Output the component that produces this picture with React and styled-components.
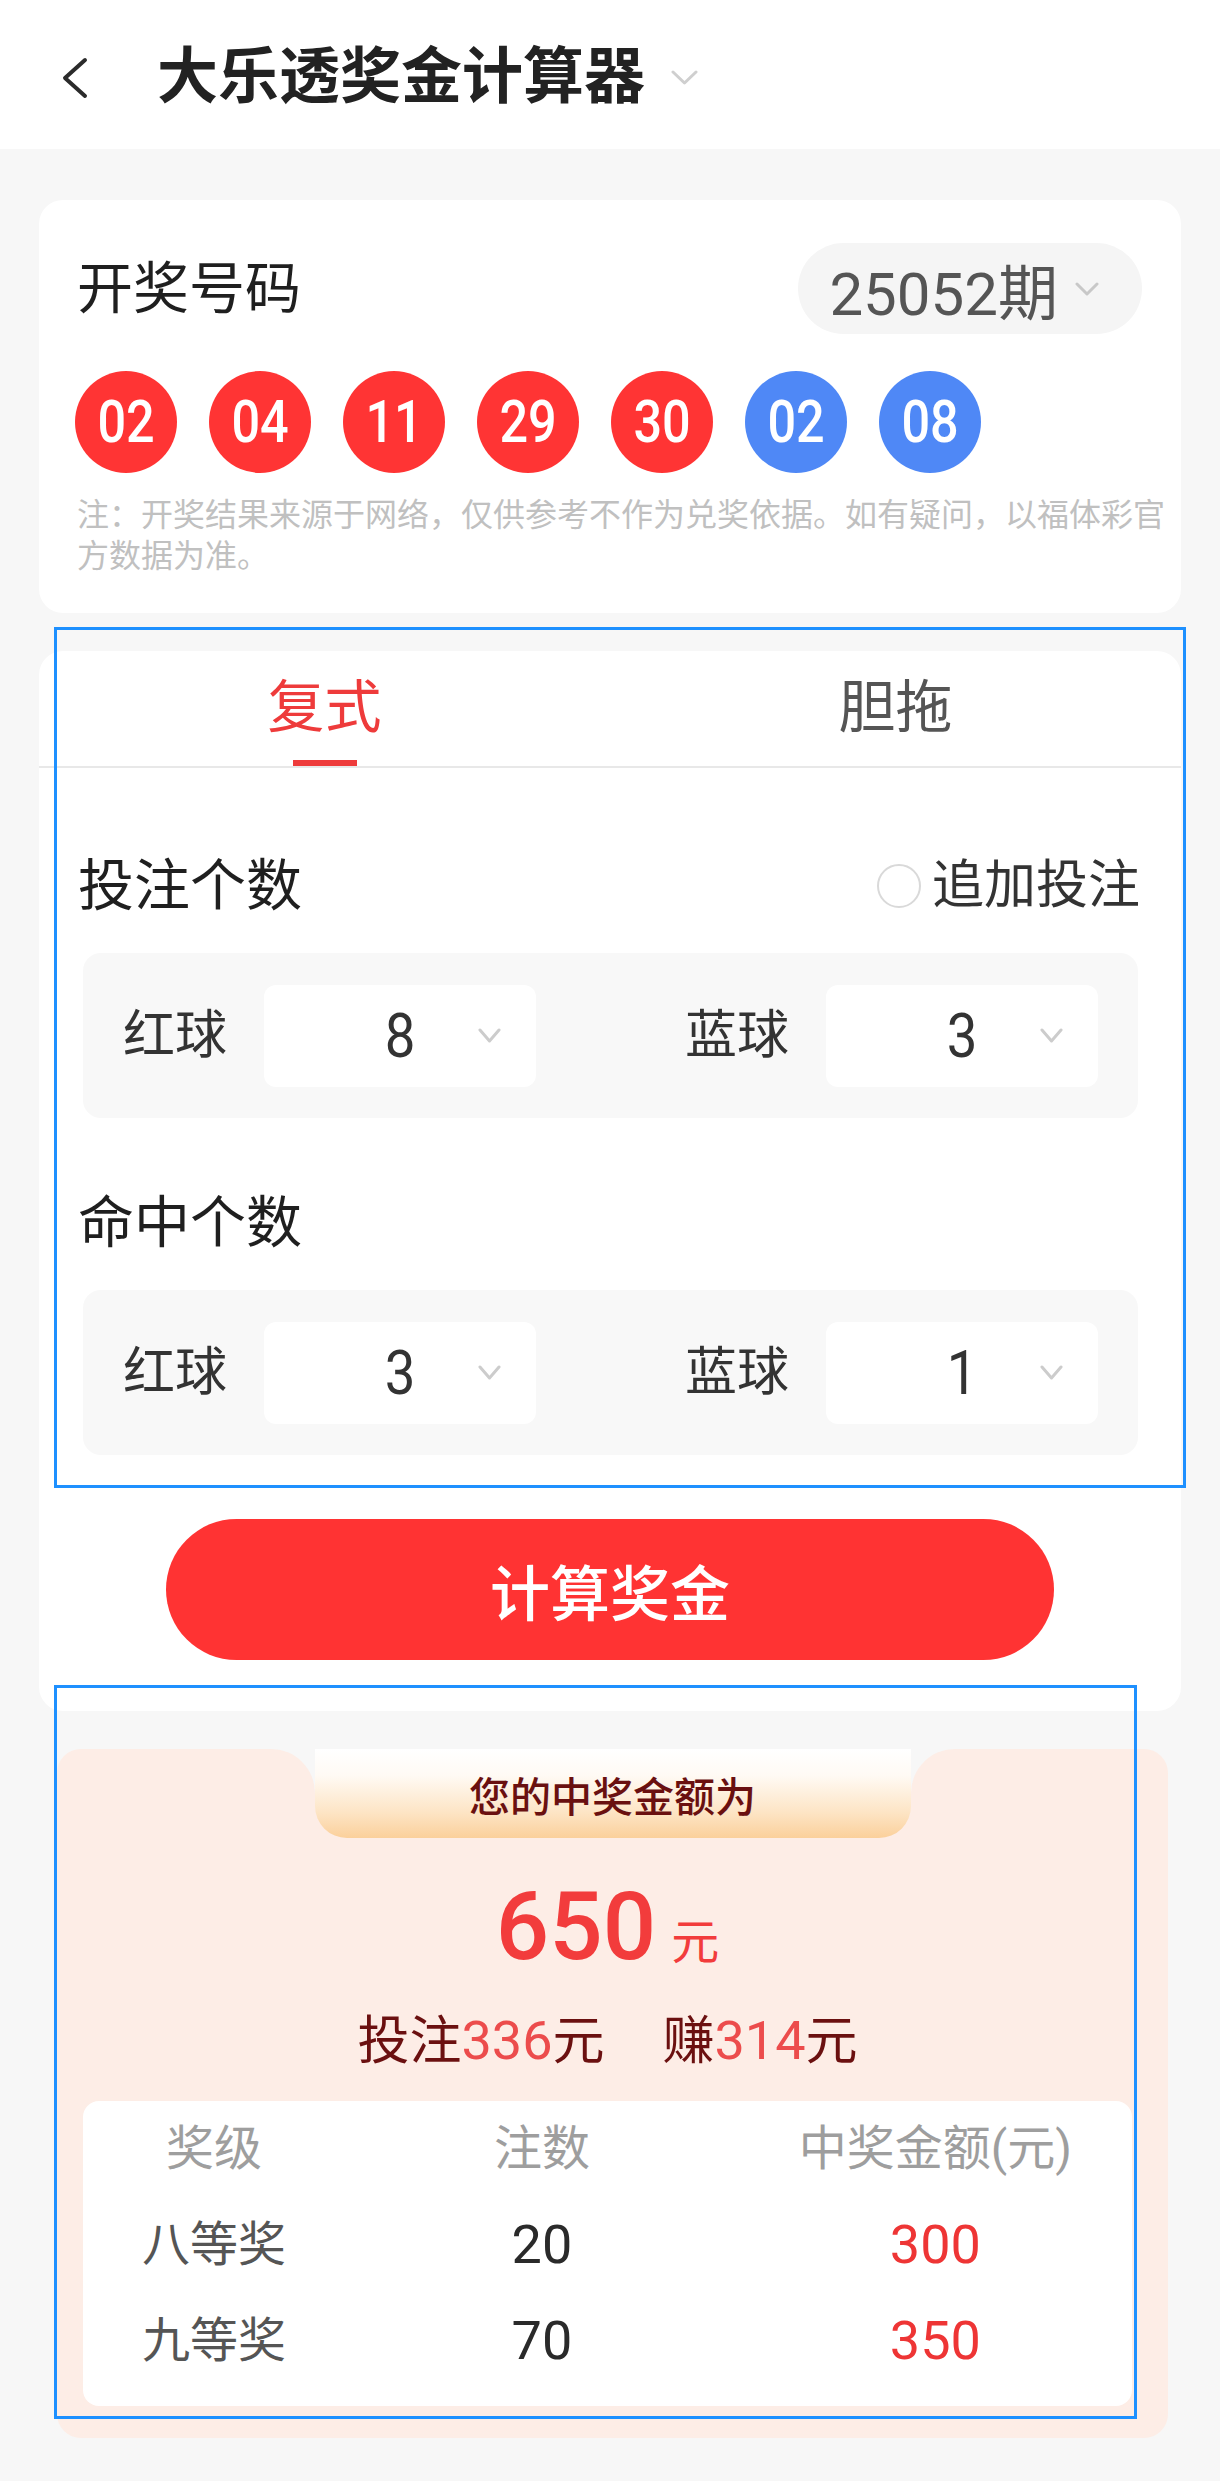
import React from 'react';
import styled, { createGlobalStyle } from 'styled-components';

const GlobalStyle = createGlobalStyle`
  * { box-sizing: border-box; }
  body {
    margin: 0;
    background: #f7f7f7;
    font-family: Roboto, "Noto Sans CJK SC", sans-serif;
    color: #333;
  }
`;

const Page = styled.div`
  position: relative;
  width: 1220px;
  min-height: 2481px;
  background: #f7f7f7;
`;

/* ---------- header ---------- */

const Header = styled.header`
  height: 149px;
  background: #fff;
  display: flex;
  align-items: center;
  padding: 6px 0 0 60px;
`;

const BackIcon = styled.svg`
  width: 30px;
  height: 44px;
  margin-right: 67px;
  flex-shrink: 0;
`;

const Title = styled.h1`
  margin: 0;
  font-size: 61px;
  line-height: 1;
  font-weight: 700;
  color: #222;
`;

const CaretSvg = styled.svg`
  width: ${(p) => p.$w}px;
  height: ${(p) => p.$h}px;
  flex-shrink: 0;
  margin-left: ${(p) => p.$ml || 0}px;
`;

const Chevron = ({ w, h, color = '#cfcfcf', stroke = 3, ml }) => (
  <CaretSvg $w={w} $h={h} $ml={ml} viewBox={`0 0 ${w} ${h}`}>
    <polyline
      points={`2,2 ${w / 2},${h - 2} ${w - 2},2`}
      fill="none"
      stroke={color}
      strokeWidth={stroke}
      strokeLinecap="round"
      strokeLinejoin="round"
    />
  </CaretSvg>
);

/* ---------- layout ---------- */

const Main = styled.main`
  padding: 51px 39px 0;
  display: flex;
  flex-direction: column;
`;

const Card = styled.section`
  background: #fff;
  border-radius: 24px;
`;

const DrawCard = styled(Card)`
  padding: 43px 39px 36px 38px;
`;

const Row = styled.div`
  display: flex;
  justify-content: space-between;
  align-items: center;
`;

const SectionTitle = styled.div`
  font-size: 56px;
  line-height: 72px;
  color: #1f1f1f;
`;

const PeriodPill = styled.div`
  height: 91px;
  padding: 0 43px 0 31px;
  border-radius: 46px;
  background: #f5f5f5;
  display: flex;
  align-items: center;
  gap: 17px;
  font-size: 60px;
  color: #555;
`;

const Balls = styled.div`
  display: flex;
  gap: 32px;
  margin-top: 37px;
  margin-left: -2px;
`;

const Ball = styled.div`
  width: 102px;
  height: 102px;
  border-radius: 50%;
  background: ${(p) => (p.$blue ? '#4f88f6' : '#ff3434')};
  display: flex;
  align-items: center;
  justify-content: center;
`;

const BallNum = styled.span`
  display: inline-block;
  font-size: 60px;
  font-weight: 500;
  color: #fff;
  line-height: 1;
  transform: scaleX(0.84);
`;

const Note = styled.p`
  margin: 22px -26px 0 0;
  font-size: 32px;
  line-height: 41px;
  color: #c0c0c0;
`;

/* ---------- calculator card ---------- */

const CalcCard = styled(Card)`
  margin-top: 38px;
  padding-bottom: 51px;
`;

const Tabs = styled.div`
  display: flex;
  border-bottom: 2px solid #e8e8e8;
`;

const Tab = styled.div`
  flex: 1;
  display: flex;
  flex-direction: column;
  align-items: center;
  padding-top: 21px;
  font-size: 57px;
  line-height: 72px;
  color: ${(p) => (p.$active ? '#ee3b3b' : '#555')};
`;

const TabLine = styled.span`
  width: 64px;
  height: 6px;
  margin-top: 16px;
  background: ${(p) => (p.$active ? '#ee3b3b' : 'transparent')};
`;

const CalcBody = styled.div`
  padding: 0 39px;
`;

const FieldHeader = styled(Row)`
  margin-top: ${(p) => p.$gap}px;
`;

const AddOn = styled.label`
  display: flex;
  align-items: center;
  gap: 11px;
  font-size: 52px;
  line-height: 72px;
  color: #333;
  margin-right: 2px;
`;

const Radio = styled.span`
  width: 44px;
  height: 44px;
  border-radius: 50%;
  border: 2px solid #d9d9d9;
  background: #fff;
`;

const PickGroup = styled.div`
  margin: 31px 4px 0 5px;
  height: 165px;
  padding: 0 40px;
  border-radius: 18px;
  background: #f8f8f8;
  display: flex;
  justify-content: space-between;
  align-items: center;
`;

const Picker = styled.div`
  display: flex;
  align-items: center;
  gap: 37px;
`;

const PickLabel = styled.span`
  font-size: 52px;
  line-height: 1;
  color: #333;
`;

const Select = styled.div`
  width: 272px;
  height: 102px;
  border-radius: 12px;
  background: #fff;
  display: flex;
  align-items: center;
  padding: 0 35px 0 58px;
`;

const SelectValue = styled.span`
  flex: 1;
  text-align: center;
  font-size: 62px;
  line-height: 1;
  color: #333;
  transform: scaleX(0.88);
`;

const CalcButton = styled.button`
  margin: 64px auto 0;
  width: 888px;
  height: 141px;
  border: none;
  border-radius: 71px;
  background: #ff3333;
  color: #fff;
  font-family: inherit;
  font-size: 60px;
  font-weight: 500;
  display: flex;
  align-items: center;
  justify-content: center;
`;

/* ---------- result ---------- */

const ResultPanel = styled.section`
  margin: 38px 13px 0 18px;
`;

const ResultTop = styled.div`
  display: grid;
  grid-template-columns: 1fr 596px 1fr;
  height: 89px;
  background: linear-gradient(to bottom, transparent 50%, #fdede6 50%);
`;

const Wing = styled.div`
  background: #fdede6;
  border-radius: ${(p) => (p.$right ? '44px 24px 0 0' : '24px 44px 0 0')};
`;

const Banner = styled.div`
  border-radius: 0 0 32px 32px;
  background: linear-gradient(180deg, #ffffff 0%, #fffaf4 30%, #fde4c4 72%, #fbd09b 100%);
  display: flex;
  align-items: center;
  justify-content: center;
  font-size: 41px;
  font-weight: 500;
  color: #6a1010;
`;

const ResultBody = styled.div`
  background: #fdede6;
  border-radius: 0 0 24px 24px;
  padding: 42px 36px 32px 26px;
  display: flex;
  flex-direction: column;
  align-items: center;
`;

const Amount = styled.div`
  display: flex;
  align-items: baseline;
  line-height: 1;
  color: #f23c3c;
`;

const AmountValue = styled.span`
  font-size: 94px;
  font-weight: 500;
`;

const AmountUnit = styled.span`
  font-size: 48px;
  margin-left: 15px;
`;

const Summary = styled.div`
  margin-top: 30px;
  display: flex;
  gap: 58px;
  font-size: 52px;
  line-height: 73px;
  color: #6b1010;
`;

const Hi = styled.span`
  color: #ec4c4c;
  font-size: 54px;
`;

const PrizeTable = styled.div`
  align-self: stretch;
  margin-top: 23px;
  padding-bottom: 17px;
  border-radius: 16px;
  background: #fff;
`;

const TableRow = styled.div`
  display: grid;
  grid-template-columns: 1fr 1.5fr 1.5fr;
  height: 96px;
  align-items: center;
  justify-items: center;
`;

const Cell = styled.span`
  font-size: ${(p) => (p.$num ? 54 : 48)}px;
  line-height: 1;
  color: ${(p) => p.$color || '#666'};
`;

/* ---------- screenshot highlight boxes ---------- */

const Highlight = styled.div`
  position: absolute;
  left: ${(p) => p.$x}px;
  top: ${(p) => p.$y}px;
  width: ${(p) => p.$w}px;
  height: ${(p) => p.$h}px;
  border: 3px solid #1e90ff;
  pointer-events: none;
`;

const balls = [
  { n: '02' }, { n: '04' }, { n: '11' }, { n: '29' }, { n: '30' },
  { n: '02', blue: true }, { n: '08', blue: true },
];

const prizes = [
  { level: '八等奖', count: '20', money: '300' },
  { level: '九等奖', count: '70', money: '350' },
];

const PickRow = ({ red, blue }) => (
  <PickGroup>
    <Picker>
      <PickLabel>红球</PickLabel>
      <Select>
        <SelectValue>{red}</SelectValue>
        <Chevron w={23} h={15} color="#cccccc" />
      </Select>
    </Picker>
    <Picker>
      <PickLabel>蓝球</PickLabel>
      <Select>
        <SelectValue>{blue}</SelectValue>
        <Chevron w={23} h={15} color="#cccccc" />
      </Select>
    </Picker>
  </PickGroup>
);

export default function App() {
  return (
    <Page>
      <GlobalStyle />
      <Header>
        <BackIcon viewBox="0 0 30 44">
          <polyline points="25,4 5,22 25,40" fill="none" stroke="#2b2b2b" strokeWidth="4" strokeLinecap="round" strokeLinejoin="round" />
        </BackIcon>
        <Title>大乐透奖金计算器</Title>
        <Chevron w={27} h={15} color="#cfcfcf" ml={26} />
      </Header>

      <Main>
        <DrawCard>
          <Row>
            <SectionTitle>开奖号码</SectionTitle>
            <PeriodPill>
              <span>25052期</span>
              <Chevron w={24} h={14} color="#c8c8c8" />
            </PeriodPill>
          </Row>
          <Balls>
            {balls.map((b, i) => (
              <Ball key={i} $blue={b.blue}>
                <BallNum>{b.n}</BallNum>
              </Ball>
            ))}
          </Balls>
          <Note>注：开奖结果来源于网络，仅供参考不作为兑奖依据。如有疑问，以福体彩官方数据为准。</Note>
        </DrawCard>

        <CalcCard>
          <Tabs>
            <Tab $active>
              复式
              <TabLine $active />
            </Tab>
            <Tab>
              胆拖
              <TabLine />
            </Tab>
          </Tabs>
          <CalcBody>
            <FieldHeader $gap={82}>
              <SectionTitle>投注个数</SectionTitle>
              <AddOn>
                <Radio />
                追加投注
              </AddOn>
            </FieldHeader>
            <PickRow red="8" blue="3" />
            <FieldHeader $gap={69}>
              <SectionTitle>命中个数</SectionTitle>
            </FieldHeader>
            <PickRow red="3" blue="1" />
          </CalcBody>
          <CalcButton>计算奖金</CalcButton>
        </CalcCard>

        <ResultPanel>
          <ResultTop>
            <Wing />
            <Banner>您的中奖金额为</Banner>
            <Wing $right />
          </ResultTop>
          <ResultBody>
            <Amount>
              <AmountValue>650</AmountValue>
              <AmountUnit>元</AmountUnit>
            </Amount>
            <Summary>
              <span>投注<Hi>336</Hi>元</span>
              <span>赚<Hi>314</Hi>元</span>
            </Summary>
            <PrizeTable>
              <TableRow>
                <Cell $color="#9e9e9e">奖级</Cell>
                <Cell $color="#9e9e9e">注数</Cell>
                <Cell $color="#9e9e9e">中奖金额(元)</Cell>
              </TableRow>
              {prizes.map((p) => (
                <TableRow key={p.level}>
                  <Cell $color="#555">{p.level}</Cell>
                  <Cell $num $color="#2a2a2a">{p.count}</Cell>
                  <Cell $num $color="#ee3535">{p.money}</Cell>
                </TableRow>
              ))}
            </PrizeTable>
          </ResultBody>
        </ResultPanel>
      </Main>

      <Highlight $x={54} $y={627} $w={1132} $h={861} />
      <Highlight $x={54} $y={1685} $w={1083} $h={734} />
    </Page>
  );
}
